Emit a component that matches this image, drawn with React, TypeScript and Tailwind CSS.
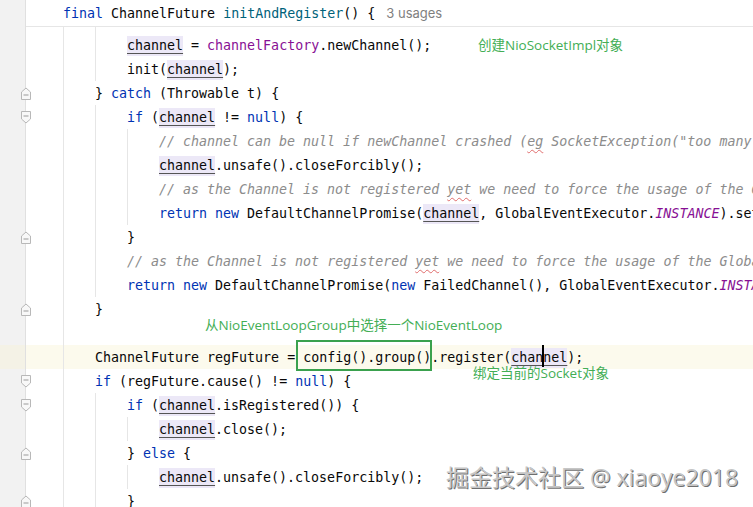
type Kind = 'p' | 'k' | 'v' | 'f' | 'm' | 'c' | 't' | 's';
type Tok = [Kind, string];

interface Line {
  level: number;
  guides: number[];
  toks: Tok[];
  fold?: 'start' | 'end';
  active?: boolean;
}

const tokClass: Record<Kind, string> = {
  p: 'text-[#080808]',
  k: 'text-[#0033b3]',
  v: 'inline-block leading-[20px] bg-[#ece8f7] text-[#080808] underline decoration-[#555] underline-offset-[3px]',
  f: 'text-[#871094]',
  m: 'text-[#00627a]',
  c: 'italic text-[#8c8c8c]',
  t: 'italic text-[#8c8c8c] underline decoration-wavy decoration-[#e06c6c] underline-offset-[3px] decoration-[1px]',
  s: 'italic text-[#871094]',
};

const asYet: Tok[] = [
  ['c', '// as the Channel is not registered '],
  ['t', 'yet'],
  ['c', ' we need to force the usage of the GlobalEventExecutor'],
];

const lines: Line[] = [
  { level: 2, guides: [0, 1], toks: [['v', 'channel'], ['p', ' = '], ['f', 'channelFactory'], ['p', '.newChannel();']] },
  { level: 2, guides: [0, 1], toks: [['p', 'init('], ['v', 'channel'], ['p', ');']] },
  { level: 1, guides: [0], fold: 'end', toks: [['p', '} '], ['k', 'catch'], ['p', ' (Throwable t) {']] },
  { level: 2, guides: [0, 1], fold: 'start', toks: [['k', 'if'], ['p', ' ('], ['v', 'channel'], ['p', ' != '], ['k', 'null'], ['p', ') {']] },
  {
    level: 3,
    guides: [0, 1, 2],
    toks: [['c', '// channel can be null if newChannel crashed ('], ['t', 'eg'], ['c', ' SocketException("too many open files"))']],
  },
  { level: 3, guides: [0, 1, 2], toks: [['v', 'channel'], ['p', '.unsafe().closeForcibly();']] },
  { level: 3, guides: [0, 1, 2], toks: asYet },
  {
    level: 3,
    guides: [0, 1, 2],
    toks: [['k', 'return new'], ['p', ' DefaultChannelPromise('], ['v', 'channel'], ['p', ', GlobalEventExecutor.'], ['s', 'INSTANCE'], ['p', ').setFailure(t);']],
  },
  { level: 2, guides: [0, 1], fold: 'end', toks: [['p', '}']] },
  { level: 2, guides: [0, 1], toks: asYet },
  {
    level: 2,
    guides: [0, 1],
    toks: [['k', 'return new'], ['p', ' DefaultChannelPromise('], ['k', 'new'], ['p', ' FailedChannel(), GlobalEventExecutor.'], ['s', 'INSTANCE'], ['p', ').setFailure(t);']],
  },
  { level: 1, guides: [0], fold: 'end', toks: [['p', '}']] },
  { level: 1, guides: [0], toks: [] },
  { level: 1, guides: [0], active: true, toks: [['p', 'ChannelFuture regFuture = config().group().register('], ['v', 'channel'], ['p', ');']] },
  { level: 1, guides: [0], fold: 'start', toks: [['k', 'if'], ['p', ' (regFuture.cause() != '], ['k', 'null'], ['p', ') {']] },
  { level: 2, guides: [0, 1], fold: 'start', toks: [['k', 'if'], ['p', ' ('], ['v', 'channel'], ['p', '.isRegistered()) {']] },
  { level: 3, guides: [0, 1, 2], toks: [['v', 'channel'], ['p', '.close();']] },
  { level: 2, guides: [0, 1], fold: 'end', toks: [['p', '} '], ['k', 'else'], ['p', ' {']] },
  { level: 3, guides: [0, 1, 2], toks: [['v', 'channel'], ['p', '.unsafe().closeForcibly();']] },
  { level: 2, guides: [0, 1], fold: 'end', toks: [['p', '}']] },
];

const mono = "font-['DejaVu_Sans_Mono',monospace] text-[13.3px]";
const cjk = "font-['Open_Sans','Noto_Sans_CJK_SC',sans-serif]";

function FoldMark({ kind }: { kind: 'start' | 'end' }) {
  return (
    <svg width="12" height="13" viewBox="0 0 12 13" className="absolute left-[20px] top-[6px]">
      {kind === 'start' ? (
        <>
          <path d="M1.5 0.5 H10.5 V8 L6 12 L1.5 8 Z" fill="#f8f8f8" stroke="#b8b8b8" />
          <path d="M3.5 5 H8.5" stroke="#9a9a9a" />
        </>
      ) : (
        <>
          <path d="M1.5 12.5 H10.5 V5 L6 1 L1.5 5 Z" fill="#f8f8f8" stroke="#b8b8b8" />
          <path d="M3.5 8 H8.5" stroke="#9a9a9a" />
        </>
      )}
    </svg>
  );
}

function Guides({ count, guides }: { count: number; guides: number[] }) {
  return (
    <>
      {Array.from({ length: count }).map((_, i) => (
        <div
          key={i}
          className={`w-[32px] h-full shrink-0 border-l ${guides.includes(i) ? 'border-[#e6e6e6]' : 'border-transparent'}`}
        />
      ))}
    </>
  );
}

function CodeRow({ line }: { line: Line }) {
  const count = Math.max(line.level, ...line.guides.map(g => g + 1));
  return (
    <div className={`relative flex h-[24px] ${line.active ? 'bg-[#fcfaed]' : ''}`}>
      <div className={`w-[26px] shrink-0 border-r border-[#e0e0e0] ${line.active ? 'bg-[#f4f2e6]' : 'bg-[#f2f2f2]'}`} />
      <div className="w-[37px] shrink-0" />
      <Guides count={count} guides={line.guides} />
      <div className={`absolute top-[1px] h-full flex items-center whitespace-pre leading-[24px] ${mono}`} style={{ left: 63 + 32 * line.level }}>
        {line.toks.map(([k, s], i) => (
          <span key={i} className={tokClass[k]}>
            {s}
          </span>
        ))}
      </div>
      {line.fold && <FoldMark kind={line.fold} />}
    </div>
  );
}

export default function App() {
  return (
    <div className="relative w-[753px] h-[507px] overflow-hidden bg-white">
      {/* sticky method header */}
      <div className="flex h-[27px]">
        <div className="w-[26px] shrink-0 border-r border-[#e0e0e0] bg-[#f2f2f2]" />
        <div className="flex-1 flex items-center pt-[2px] pl-[37px] border-b border-[#e6e6e6] whitespace-pre">
          <span className={mono}>
            <span className={tokClass.k}>final</span>
            <span className={tokClass.p}> ChannelFuture </span>
            <span className={tokClass.m}>initAndRegister</span>
            <span className={tokClass.p}>() {'{'}</span>
          </span>
          <span className="ml-[11px] font-['Inter',sans-serif] text-[13px] text-[#7f7f7f]">3 usages</span>
        </div>
      </div>

      {/* partially scrolled-off row */}
      <div className="flex h-[6px]">
        <div className="w-[26px] shrink-0 border-r border-[#e0e0e0] bg-[#f2f2f2]" />
        <div className="w-[37px] shrink-0" />
        <Guides count={2} guides={[0, 1]} />
      </div>

      {lines.map((l, i) => (
        <CodeRow key={i} line={l} />
      ))}

      {/* annotations */}
      <div className={`absolute left-[478px] top-[35px] text-[13.5px] leading-[20px] text-[#43ae55] ${cjk}`}>创建NioSocketImpl对象</div>
      <div className={`absolute left-[205px] top-[315px] text-[13.5px] leading-[20px] text-[#43ae55] ${cjk}`}>从NioEventLoopGroup中选择一个NioEventLoop</div>
      <div className={`absolute left-[473px] top-[363px] text-[13.5px] leading-[20px] text-[#43ae55] ${cjk}`}>绑定当前的Socket对象</div>
      <div className="absolute left-[296px] top-[340px] w-[136px] h-[31px] border-2 border-[#3aa14e]" />

      {/* caret */}
      <div className="absolute left-[542px] top-[345px] w-[2px] h-[22px] bg-black" />

      {/* watermark */}
      <div
        className={`absolute left-[446px] top-[462px] text-[23px] leading-[30px] text-[#c6c6c6] whitespace-nowrap [text-shadow:1px_1px_0_#6f6f6f,-1px_-1px_0_#ffffff] ${cjk}`}
      >
        掘金技术社区 @ xiaoye2018
      </div>
    </div>
  );
}
